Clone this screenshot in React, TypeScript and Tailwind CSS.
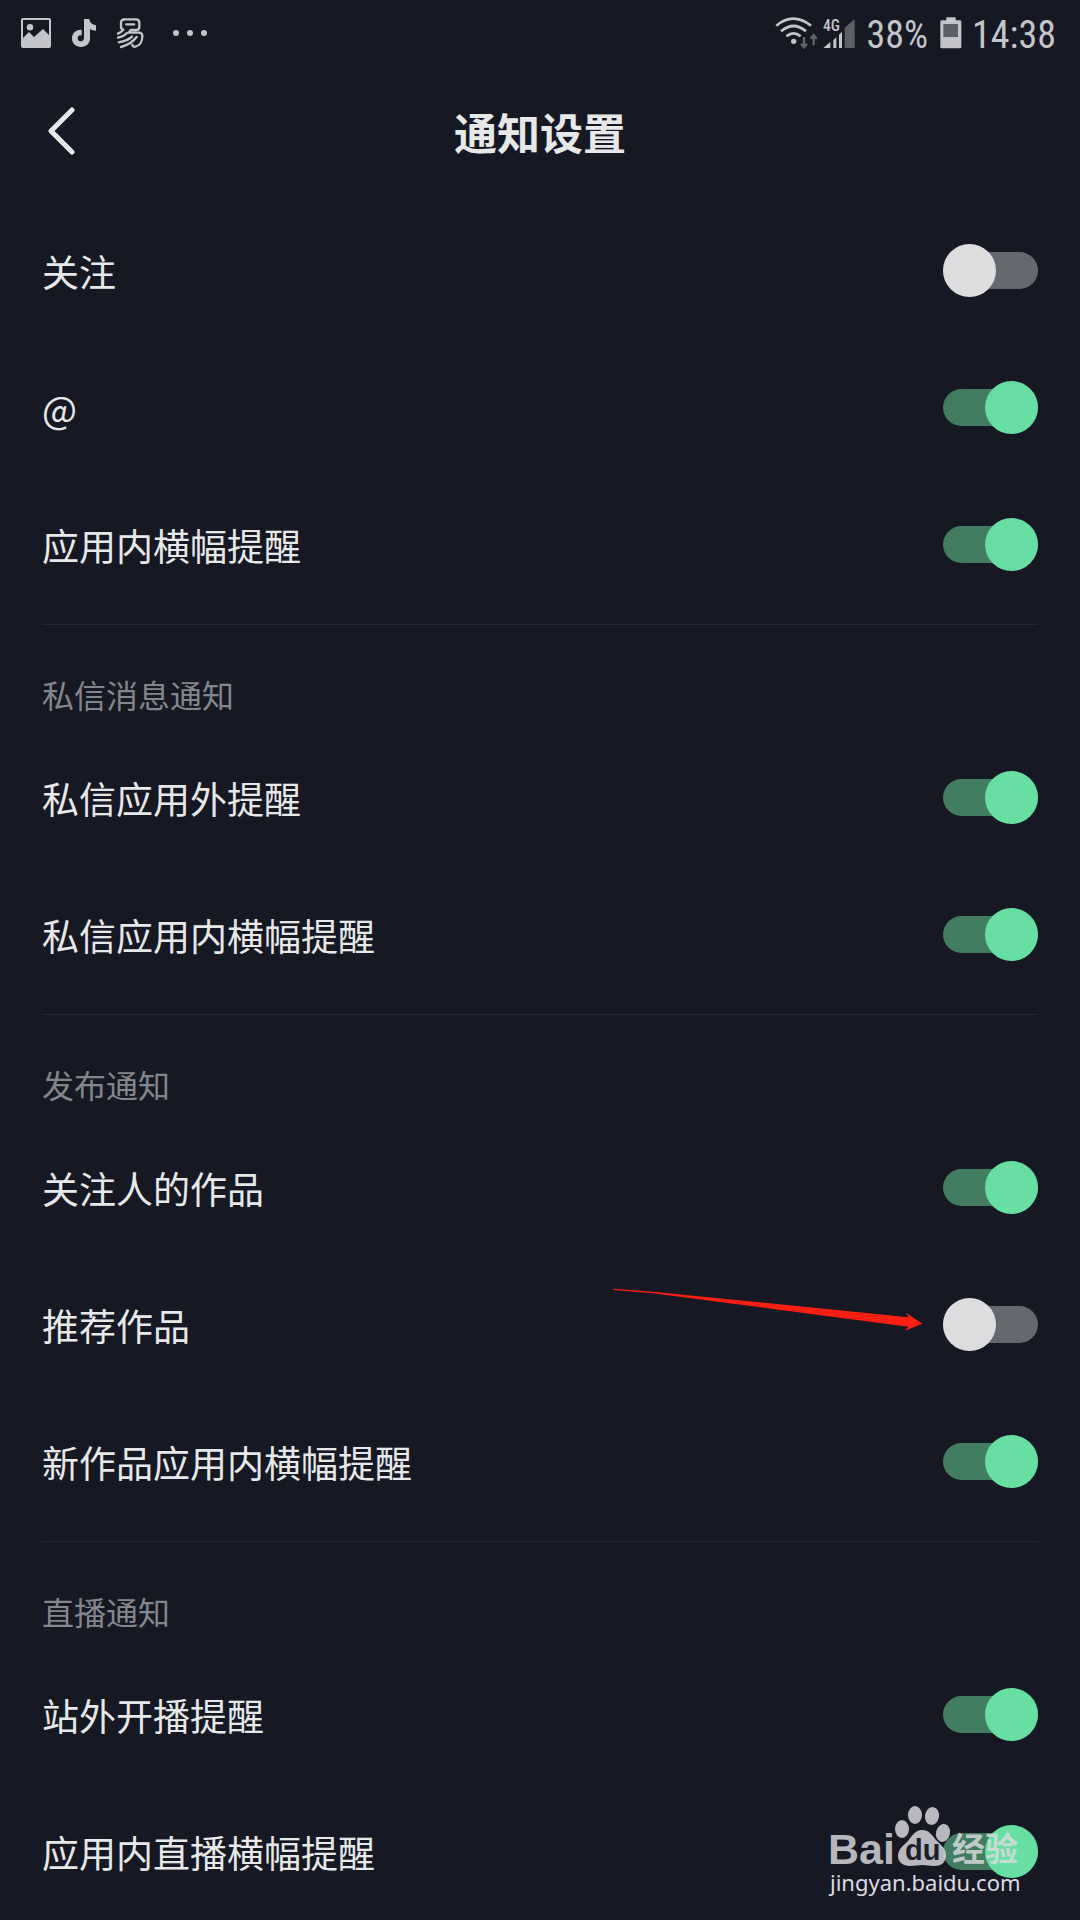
import React, { useState } from 'react';

type Item = { id: string; label: string; on: boolean; arrow?: boolean };
type Group = { title?: string; items: Item[] };

const groups: Group[] = [
    {
        items: [
            { id: 'follow', label: '关注', on: false },
            { id: 'mention', label: '@', on: true },
            { id: 'banner', label: '应用内横幅提醒', on: true },
        ],
    },
    {
        title: '私信消息通知',
        items: [
            { id: 'dm-push', label: '私信应用外提醒', on: true },
            { id: 'dm-banner', label: '私信应用内横幅提醒', on: true },
        ],
    },
    {
        title: '发布通知',
        items: [
            { id: 'post-follow', label: '关注人的作品', on: true },
            { id: 'post-recommend', label: '推荐作品', on: false, arrow: true },
            { id: 'post-banner', label: '新作品应用内横幅提醒', on: true },
        ],
    },
    {
        title: '直播通知',
        items: [
            { id: 'live-push', label: '站外开播提醒', on: true },
            { id: 'live-banner', label: '应用内直播横幅提醒', on: true },
        ],
    },
];

function StatusBar() {
    return (
        <div className="flex h-[66px] items-center justify-between pl-5 pr-6 text-[#c4c5ca]">
            <div className="flex items-center">
                <svg className="h-8 w-8" viewBox="0 0 32 32" fill="currentColor">
                    <path fillRule="evenodd" d="M3 1h26a2 2 0 0 1 2 2v26a2 2 0 0 1-2 2H3a2 2 0 0 1-2-2V3a2 2 0 0 1 2-2zm0 2v18l6-6 5 5 9-8 6 6V3zM10 7a3 3 0 1 1 0 6.500a3 3 0 0 1 0-6.500z" />
                </svg>
                <svg className="ml-5 h-7 w-6" viewBox="0 0 72 84" fill="currentColor">
                    <path d="M36 0h16c1 11 8 17 20 19v16c-7 0-13-2-18-5v28c0 16-11 26-27 26S0 74 0 58s11-27 29-26v17c-8-1-12 3-12 9s4 9 9 9 10-3 10-11z" />
                </svg>
                <svg className="ml-5 h-8 w-7" viewBox="0 0 84 96" fill="none" stroke="currentColor" strokeWidth="7" strokeLinejoin="round" strokeLinecap="round">
                    <path d="M24 7h36q10 0 10 10v12q0 10-10 10H44l-6 8h31q10 0 10 10c0 17-8 30-21 32-6 1-9-2-9-6" />
                    <path d="M24 7q-9 1-9 10v12q0 7 7 9Q15 46 6 50" />
                    <path d="M31 22h23" />
                    <path d="M6 62q17-3 27-14M8 76q27-4 40-17M15 90q30-8 47-30" />
                </svg>
                <svg className="ml-7 h-8 w-9" viewBox="0 0 36 32" fill="currentColor">
                    <circle cx="4" cy="16" r="3" />
                    <circle cx="18" cy="16" r="3" />
                    <circle cx="32" cy="16" r="3" />
                </svg>
            </div>
            <div className="flex items-center font-['Roboto_Condensed','Liberation_Sans_Narrow',Roboto,sans-serif] text-[38px] leading-[40px]">
                <svg className="h-8 w-[44px]" viewBox="0 0 132 96" fill="none" stroke="currentColor" strokeWidth="8">
                    <path d="M4 26Q54-16 108 26M18 43Q56 11 93 43M34 58q22-18 43 0" />
                    <circle cx="56" cy="73" r="8" fill="currentColor" stroke="none" />
                    <path className="text-[#62646c]" stroke="currentColor" strokeWidth="7" d="M87 60v30M78 80l9 11 9-11M116 85V54M107 65l9-11 9 11" />
                </svg>
                <svg className="ml-1 h-8 w-8" viewBox="0 0 96 96">
                    <path fill="#5d5f67" d="M65 93V32L95 6v87z" />
                    <path fill="currentColor" d="M1 93l21-18v18zM31 69l9-8v32h-9zM48 53l9-9v49h-9z" />
                    <text x="0" y="42" fontSize="47" fontWeight="500" fill="currentColor" fontFamily="Roboto Condensed, Roboto, sans-serif">4G</text>
                </svg>
                <span className="ml-3 pt-1">38%</span>
                <svg className="ml-3 h-8 w-[22px]" viewBox="0 0 66 96">
                    <path fill="currentColor" d="M19 1h28v9h13q4 0 4 4v76q0 4-4 4H5q-4 0-4-4V14q0-4 4-4h14z" />
                    <path fill="#5d5f67" d="M10 21h44v39H10z" />
                </svg>
                <span className="ml-2.5 pt-1">14:38</span>
            </div>
        </div>
    );
}

function PointerArrow() {
    return (
        <svg className="pointer-events-none absolute right-[157px] top-8 h-11 w-[310px]" viewBox="0 0 930 132" fill="#fe1f12">
            <path d="M1 2L120 11L886 88L880 75L928 107L876 128L886 116L120 16L1 6Z" />
        </svg>
    );
}

function Row({ item }: { item: Item }) {
    const [on, setOn] = useState(item.on);
    return (
        <div className="relative flex h-[137px] items-center justify-between px-[42px]">
            <label htmlFor={item.id} className="text-[37px] leading-[54px]">{item.label}</label>
            <input
                id={item.id}
                type="checkbox"
                role="switch"
                checked={on}
                onChange={() => setOn(!on)}
                className="relative h-[37px] w-[95px] shrink-0 appearance-none rounded-full bg-[#66686f] before:absolute before:-top-2 before:left-0 before:h-[53px] before:w-[53px] before:rounded-full before:bg-[#dddde0] before:content-[''] checked:bg-[#427d62] checked:before:left-[42px] checked:before:bg-[#67dfa2]"
            />
            {item.arrow && <PointerArrow />}
        </div>
    );
}

function Watermark() {
    return (
        <svg className="pointer-events-none absolute bottom-5 right-12 h-[100px] w-[208px]" viewBox="-4 0 208 100" fill="#dcdce0" fillOpacity="0.82">
            <ellipse cx="74" cy="29" rx="7" ry="9" />
            <ellipse cx="87" cy="15" rx="7" ry="9" />
            <ellipse cx="104" cy="16" rx="7" ry="9" transform="rotate(10 104 16)" />
            <ellipse cx="115" cy="33" rx="7" ry="9" transform="rotate(15 115 33)" />
            <path d="M94 30c7 0 10 5 14 10 6 6 10 9 10 15 0 8-5 11-12 11-5 0-8-1-12-1s-7 1-12 1c-7 0-12-4-12-10 0-7 5-10 10-15 4-5 7-11 14-11z" />
            <text x="0" y="64" fontSize="43" fontWeight="700" fontFamily="Liberation Sans, sans-serif">Bai</text>
            <text x="77" y="60" fontSize="29" fontWeight="700" fill="#1c1e29" fillOpacity="1" fontFamily="Liberation Sans, sans-serif">du</text>
            <text x="124" y="61" fontSize="33" fontWeight="700" fontFamily="Noto Sans CJK SC, sans-serif">经验</text>
            <text x="2" y="91" fontSize="22" fillOpacity="1" fontFamily="Noto Sans, sans-serif">jingyan.baidu.com</text>
        </svg>
    );
}

export default function App() {
    return (
        <div className="relative min-h-screen w-full bg-[#161823] font-['Noto_Sans_CJK_SC',sans-serif] text-[#e7e8ea]">
            <StatusBar />
            <header className="grid h-[136px] grid-cols-[1fr_auto_1fr] items-center px-[42px] pb-1.5">
                <button type="button" aria-label="返回" className="w-10">
                    <svg className="h-12 w-9" viewBox="0 0 36 48" fill="none" stroke="#e7e8ea" strokeWidth="5" strokeLinecap="round" strokeLinejoin="round">
                        <path d="M30 3L9 24l21 21" />
                    </svg>
                </button>
                <h1 className="text-[43px] font-bold leading-[60px]">通知设置</h1>
            </header>
            <main>
                {groups.map((group, i) => (
                    <section key={i}>
                        {group.title && (
                            <>
                                <hr className="mx-[42px] mt-[11px] border-[#262832]" />
                                <h2 className="h-[104px] px-[42px] pt-[46px] text-[32px] leading-[46px] text-[#84868d]">{group.title}</h2>
                            </>
                        )}
                        {group.items.map((item) => (
                            <Row key={item.id} item={item} />
                        ))}
                    </section>
                ))}
            </main>
            <Watermark />
        </div>
    );
}
